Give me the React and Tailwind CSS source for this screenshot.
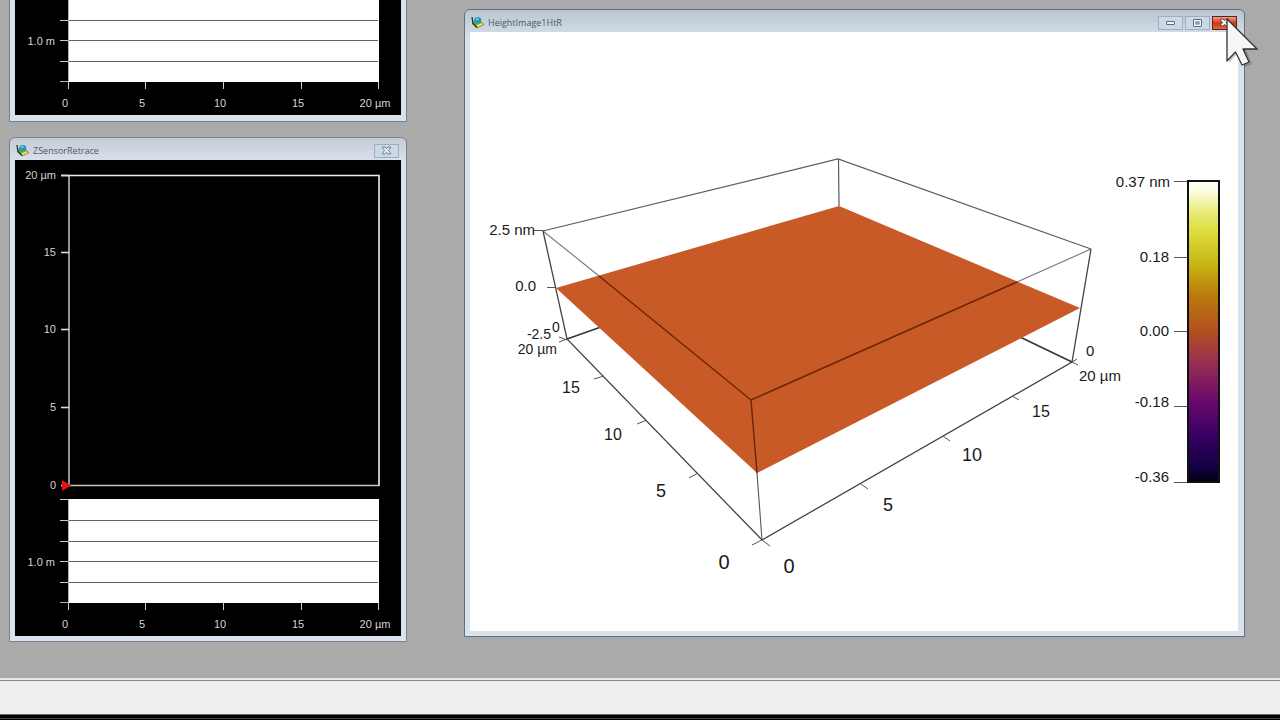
const X_TICKS = [
  { x: 53, label: '0', labelX: 50 },
  { x: 130, label: '5', labelX: 127 },
  { x: 208, label: '10', labelX: 205 },
  { x: 286, label: '15', labelX: 283 },
  { x: 363, label: '20 µm', labelX: 360 },
];

const Y_TICKS = [
  { y: 16, label: '20 µm' },
  { y: 93, label: '15' },
  { y: 170, label: '10' },
  { y: 248, label: '5' },
  { y: 326, label: '0' },
];

const BAR_TICKS = [
  { y: 149, label: '0.37 nm', labelX: 700, labelY: 155 },
  { y: 225, label: '0.18', labelX: 699, labelY: 230 },
  { y: 299, label: '0.00', labelX: 699, labelY: 304 },
  { y: 374, label: '-0.18', labelX: 699, labelY: 375 },
  { y: 450, label: '-0.36', labelX: 699, labelY: 450 },
];

function AppIcon() {
  return (
    <svg width="13" height="13" viewBox="0 0 13 13" aria-hidden="true">
      <path d="M1 7.5 L6 12 L13 8.5 L10 6 Z" fill="#e3cf3c" stroke="#7a6420" strokeWidth="0.7" />
      <path d="M2 6.5 L6 10.5 L10.5 8 L10 4 L3 4 Z" fill="#3fae4c" />
      <path d="M5 9.5 L10.5 7 L11.5 8.5 L6.5 11 Z" fill="#f3e64a" />
      <ellipse cx="6.8" cy="3.8" rx="3.5" ry="2.9" fill="#2e93bd" />
      <ellipse cx="6.2" cy="3.1" rx="1.6" ry="1.1" fill="#7cc8e0" />
      <path d="M1 1 L2 7.5 L6 11.5" fill="none" stroke="#26323a" strokeWidth="1.3" />
    </svg>
  );
}

function CloseGlyph({ fill, stroke }) {
  return (
    <svg width="11" height="9" viewBox="0 0 11 9" aria-hidden="true">
      <path
        d="M1.5 1 H4 L5.5 2.7 L7 1 H9.5 V2 L7.4 4.5 L9.5 7 V8 H7 L5.5 6.3 L4 8 H1.5 V7 L3.6 4.5 L1.5 2 Z"
        fill={fill}
        stroke={stroke}
        strokeWidth="1"
      />
    </svg>
  );
}

const buttonClass =
  'flex h-[14px] w-[25px] items-center justify-center border border-[#9dadc4] bg-[#cbd8e6]';

function TitleBar({ title, children }) {
  return (
    <div className="flex h-[22px] items-center justify-between pt-[3px] pl-px font-['Open_Sans','Noto_Sans',sans-serif]">
      <div className="flex items-center gap-1">
        <AppIcon />
        <h2 className="text-[9px] leading-[14px] text-[#4c5966]">{title}</h2>
      </div>
      <div className="flex gap-0.5 pr-0.5">{children}</div>
    </div>
  );
}

// Line profile shown under each scan image
function ScanStrip({ y }) {
  return (
    <g transform={`translate(0 ${y})`}>
      <rect x="53" y="0" width="311" height="104" fill="#fff" />
      {[1, 22, 43, 63, 84].map((lineY) => (
        <g key={lineY}>
          <path d={`M45 ${lineY - 0.5} H53`} stroke="#c9c9c9" />
          {lineY > 1 && <path d={`M53 ${lineY - 0.5} H363`} stroke="#606060" />}
        </g>
      ))}
      <path d="M45 103.5 H53 M53.5 0 V104" stroke="#b5b5b5" />
      <text x="40" y="67" textAnchor="end" fill="#d4d4d4">1.0 m</text>
      {X_TICKS.map((tick) => (
        <g key={tick.label}>
          <path d={`M${tick.x + 0.5} 104 V111`} stroke="#cfcfcf" />
          <text x={tick.labelX} y="129" textAnchor="middle" fill="#d4d4d4">{tick.label}</text>
        </g>
      ))}
    </g>
  );
}

function ScanImage() {
  return (
    <svg viewBox="0 0 386 476" className="block w-full bg-black text-[11px]" role="img" aria-label="ZSensor retrace scan">
      <path d="M54 15 V325.5 H364" fill="none" stroke="#c4c4c4" strokeWidth="1.5" />
      <path d="M46 15.5 H364 V326" fill="none" stroke="#eee" strokeWidth="1.6" />
      {Y_TICKS.map((tick) => (
        <g key={tick.label}>
          <path d={`M46 ${tick.y - 0.5} H54`} stroke="#ddd" strokeWidth="1.6" />
          <text x="41" y={tick.y + 3} textAnchor="end" fill="#d4d4d4">{tick.label}</text>
        </g>
      ))}
      <path d="M47 320 L56 325.5 L47 331 Z" fill="#e81010" />
      <ScanStrip y={339} />
    </svg>
  );
}

function SurfacePlot() {
  return (
    <svg viewBox="0 0 768 599" className="block w-full bg-white text-[15px]" role="img" aria-label="3D height image">
      <defs>
        <linearGradient id="height-scale" x1="0" y1="0" x2="0" y2="1">
          <stop offset="0" stopColor="#ffffff" />
          <stop offset="0.04" stopColor="#fbfbd8" />
          <stop offset="0.1" stopColor="#e8ec7c" />
          <stop offset="0.17" stopColor="#dcdc3c" />
          <stop offset="0.28" stopColor="#c6b414" />
          <stop offset="0.38" stopColor="#bc7a0c" />
          <stop offset="0.5" stopColor="#b25020" />
          <stop offset="0.6" stopColor="#983050" />
          <stop offset="0.73" stopColor="#6a0a6c" />
          <stop offset="0.84" stopColor="#3a0064" />
          <stop offset="0.95" stopColor="#140044" />
          <stop offset="1" stopColor="#020010" />
        </linearGradient>
      </defs>

      {/* back edges, hidden where the surface covers them */}
      <path d="M73 199 L368 127 L621 217 M368.5 127 L369 174" fill="none" stroke="#5c5c5c" strokeWidth="1.2" />
      <path d="M97 307 L131 295 M602 330 L550 305" stroke="#333" strokeWidth="1.5" />
      <path d="M86 256 L369 174 L610 276 L287 441 Z" fill="#c75a27" />

      {/* front edges */}
      <path d="M73 199 L129 244 M547 250 L621 217" stroke="#777" strokeWidth="1.1" />
      <path d="M129 244 L281 368 L547 250 M281 368 L287 441" fill="none" stroke="#6b2505" strokeWidth="1.4" />
      <path d="M287 441 L292 508" stroke="#555" strokeWidth="1.1" />
      <path d="M73 199 L97 307 L292 508 L602 330 L621 217" fill="none" stroke="#444" strokeWidth="1.3" />

      {/* axis ticks */}
      <path
        d="M64 198.5 H73 M77 255.5 H86 M89 305 L97 308 M89 310 L97 307 M124 347 L134 344 M167 392 L177 388 M219 446 L228 441 M282 513 L292 508 M292 508 L300 514 M391 452 L398 457 M473 404 L480 409 M542 364 L549 368 M602 330 L608 333 M602 330 L607 327"
        fill="none"
        stroke="#555"
      />

      <g fill="#1a1a1a">
        <text x="65" y="203" textAnchor="end">2.5 nm</text>
        <text x="66" y="259" textAnchor="end">0.0</text>
        <text x="81" y="307" textAnchor="end" className="text-[14px]">-2.5</text>
        <text x="82" y="300" className="text-[14px]">0</text>
        <text x="87" y="322" textAnchor="end" className="text-[14px]">20 µm</text>
        <text x="101" y="361" textAnchor="middle" className="text-[16px]">15</text>
        <text x="143" y="408" textAnchor="middle" className="text-[16px]">10</text>
        <text x="191" y="465" textAnchor="middle" className="text-[18px]">5</text>
        <text x="254" y="537" textAnchor="middle" className="text-[20px]">0</text>
        <text x="319" y="541" textAnchor="middle" className="text-[20px]">0</text>
        <text x="418" y="479" textAnchor="middle" className="text-[18px]">5</text>
        <text x="502" y="429" textAnchor="middle" className="text-[18px]">10</text>
        <text x="571" y="385" textAnchor="middle" className="text-[16px]">15</text>
        <text x="609" y="349">20 µm</text>
        <text x="616" y="324">0</text>
        {BAR_TICKS.map((tick) => (
          <text key={tick.label} x={tick.labelX} y={tick.labelY} textAnchor="end">{tick.label}</text>
        ))}
      </g>

      {BAR_TICKS.map((tick) => (
        <path key={tick.label} d={`M704 ${tick.y + 0.5} H718`} stroke="#555" />
      ))}
      <rect x="718" y="149" width="31" height="301" fill="url(#height-scale)" stroke="#111" strokeWidth="2" />
    </svg>
  );
}

function Pointer() {
  return (
    <svg
      width="36"
      height="52"
      viewBox="0 0 36 52"
      className="pointer-events-none absolute top-[7px] -right-[17px]"
      aria-hidden="true"
    >
      <path d="M4 5 V46 L13 36 L20 50 L27 47 L21 33 H34 Z" fill="#000" opacity="0.2" />
      <path
        d="M2 2 V44 L10.5 35 L17 48 L24 45 L18 32 H32 Z"
        fill="#f7f7fa"
        stroke="#333"
        strokeWidth="1.3"
        strokeLinejoin="round"
      />
    </svg>
  );
}

export default function App() {
  return (
    <div className="flex min-h-screen flex-col bg-[#aaaaaa] font-['Liberation_Sans',Arial,sans-serif]">
      <main className="flex flex-1 items-start gap-[57px] pr-[35px] pl-[9px]">
        <div className="flex w-[398px] shrink-0 flex-col gap-[15px]">
          <section className="border border-t-0 border-[#79828c] bg-[#d9e1ea] px-[5px] pb-[6px]" aria-label="Scan window">
            <svg viewBox="0 0 386 115" className="block w-full bg-black text-[11px]" role="img" aria-label="Line profile">
              <ScanStrip y={-22} />
            </svg>
          </section>

          <section className="rounded-t-md border border-[#79828c] bg-linear-to-b from-[#c3ccd6] to-[#dbe3ee] to-5% px-[5px] pb-[5px]">
            <TitleBar title="ZSensorRetrace">
              <button type="button" aria-label="Close" className={buttonClass}>
                <CloseGlyph fill="#e6edf5" stroke="#6b7d93" />
              </button>
            </TitleBar>
            <ScanImage />
          </section>
        </div>

        <section className="relative mt-[9px] min-w-0 flex-1 rounded-t-md border border-[#5f7080] bg-linear-to-b from-[#b9c5d0] to-[#d9e3ec] to-5% px-[5px] pb-[5px]">
          <TitleBar title="HeightImage1HtR">
            <button type="button" aria-label="Minimize" className={buttonClass}>
              <svg width="9" height="5" viewBox="0 0 9 5" aria-hidden="true">
                <rect x="0.5" y="1.5" width="8" height="3" rx="0.5" fill="#f2f5f8" stroke="#5d6a78" />
              </svg>
            </button>
            <button type="button" aria-label="Maximize" className={buttonClass}>
              <svg width="9" height="8" viewBox="0 0 9 8" aria-hidden="true">
                <rect x="0.5" y="0.5" width="8" height="7" rx="0.5" fill="#f2f5f8" stroke="#5d6a78" />
                <rect x="3" y="3" width="3" height="2" fill="none" stroke="#5d6a78" />
              </svg>
            </button>
            <button
              type="button"
              aria-label="Close"
              className="flex h-[14px] w-[25px] items-center justify-center border border-[#6e1c14] bg-linear-to-b from-[#e9a08c] via-[#c8361a] to-[#e2663c]"
            >
              <CloseGlyph fill="#fff" stroke="#7a3a34" />
            </button>
          </TitleBar>
          <div className="pr-px">
            <SurfacePlot />
          </div>
          <Pointer />
        </section>
      </main>

      <footer>
        <div className="h-[34px] border-t border-[#8a8a8a] bg-[#f0eeee] shadow-[0_-2px_0_#e8e8e8]" />
        <div className="h-[6px] border-t border-[#6a6a6a] bg-black pt-[3px]">
          <div className="border-t border-[#4a4648]" />
        </div>
      </footer>
    </div>
  );
}
